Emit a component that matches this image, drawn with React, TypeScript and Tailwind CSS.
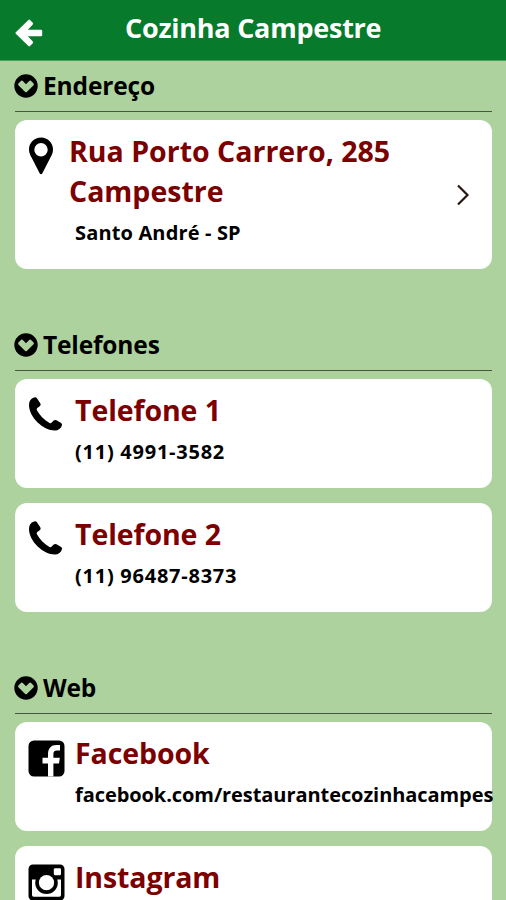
import type { ReactNode } from "react";

const SectionTitle = ({ children }: { children: ReactNode }) => {
  return (
    <div className="flex h-[51px] items-center border-b border-[#46583f] gap-[6px]">
      <svg className="-ml-[1px] h-[24px] w-[24px] shrink-0" viewBox="0 0 24 24">
        <circle cx="12" cy="12" r="11.7" fill="#000" />
        <path
          d="M4.4 9.6 L7.2 6.8 Q8 6.2 8.8 7 L12 10.2 L15.2 7 Q16 6.2 16.8 6.8 L19.6 9.6 Q20.2 10.4 19.6 11.2 L12.8 18 Q12 18.7 11.2 18 L4.4 11.2 Q3.8 10.4 4.4 9.6 Z"
          fill="#aed29d"
        />
      </svg>
      <h2 className="-ml-[1px] text-[24.5px] leading-[30px] font-bold tracking-[-0.15px] text-black whitespace-nowrap">{children}</h2>
    </div>
  );
};

const PinIcon = () => {
  return (
    <svg className="h-[38px] w-[26px]" viewBox="0 0 25 38">
      <path
        fillRule="evenodd"
        d="M12.5 0.5 C5.8 0.5 0.5 5.8 0.5 12.5 C0.5 15.5 1.6 18 3.2 20.8 L11 36 Q12.5 38.6 14 36 L21.8 20.8 C23.4 18 24.5 15.5 24.5 12.5 C24.5 5.8 19.2 0.5 12.5 0.5 Z M12.5 6 A6.7 6.7 0 1 1 12.5 19.4 A6.7 6.7 0 1 1 12.5 6 Z"
      />
    </svg>
  );
};

const PhoneIcon = () => {
  return (
    <svg className="h-[34px] w-[35px]" viewBox="0 0 34 34">
      <path d="M5.6 0.5 C2.2 1.6 0.4 4.3 0.5 8.4 C1 20.5 14.4 33 26.4 33.5 C29.8 33.5 32.6 31.6 33.5 28 Q33.8 26.6 32.6 25.9 L28 23.2 Q26.4 22.4 25.2 23.6 L23.2 25.6 Q22.2 26.5 21 25.9 C15.2 22.6 11.2 18.6 8.3 13.1 Q7.8 11.9 8.8 11.1 L11.2 9.3 Q12.8 8.2 11.9 6.6 L8.6 1.4 Q7.5 0 5.6 0.5 Z" />
    </svg>
  );
};

const FacebookIcon = () => {
  return (
    <svg className="h-[37px] w-[37px]" viewBox="0 0 37 37">
      <rect x="0.5" y="0.5" width="36" height="36" rx="5.5" />
      <path
        d="M20 36.5 V23.4 H14.5 V17.8 H20 V14 C20 8.4 23.3 5 28.3 5 H32 V10.4 H29 C26.7 10.4 25.4 11.5 25.4 13.8 V17.8 H31.8 L31 23.4 H25.4 V36.5 Z"
        fill="#fff"
      />
    </svg>
  );
};

const InstagramIcon = () => {
  return (
    <svg className="h-[37px] w-[37px]" viewBox="0 0 37 37">
      <rect x="0.5" y="0.5" width="36" height="36" rx="4.5" />
      <path d="M4 15.5 H33 V31 Q33 32.7 31.3 32.7 H5.7 Q4 32.7 4 31 Z" fill="#fff" />
      <circle cx="18.5" cy="18.7" r="11.3" />
      <circle cx="18.5" cy="18.7" r="7.6" fill="#fff" />
      <rect x="25.8" y="4.3" width="7.2" height="7" rx="1.2" fill="#fff" />
    </svg>
  );
};

const Card = ({ icon, title, children }: any) => {
  return (
    <div className="flex h-[109px] rounded-[12px] bg-white pl-[13px] pt-[18px]">
      <div className="w-[47px] shrink-0">{icon}</div>
      <div className="-mt-[7px] flex-1">
        <h3 className="text-[28.5px] leading-[40px] font-bold tracking-[-0.1px] text-[#7c0000]">{title}</h3>
        {children}
      </div>
    </div>
  );
};

const App = () => {
  return (
    <div className="h-[900px] w-[506px] overflow-hidden bg-[#aed29d] font-['Open_Sans','Noto_Sans',sans-serif] text-black">
      <header className="flex h-[61px] items-center border-b border-[#4d9f55] bg-[#077a2b] pl-[15px]">
        <svg className="mt-[5px] h-[28px] w-[28px] shrink-0" viewBox="0 0 28 28">
          <path
            d="M0.8 14.8 Q0 14 0.8 13.2 L13.4 1 Q14.2 0.2 15 0.9 L17.8 3.8 Q18.5 4.6 17.8 5.4 L12.9 10.7 H26 Q27.2 10.7 27.2 11.9 V16.1 Q27.2 17.3 26 17.3 H12.9 L17.8 22.6 Q18.5 23.4 17.8 24.2 L15 27.1 Q14.2 27.8 13.4 27 Z"
            fill="#fff"
          />
        </svg>
        <h1 className="-mt-[5px] ml-[82px] text-[27px] leading-[36px] font-bold tracking-[-0.25px] text-white whitespace-nowrap">Cozinha Campestre</h1>
      </header>
      <main className="pl-[15px] pr-[14px]">
        <SectionTitle>Endereço</SectionTitle>
        <div className="mt-[8px] flex h-[149px] rounded-[12px] bg-white pl-[13px] pt-[17px]">
          <div className="w-[41px] shrink-0">
            <PinIcon />
          </div>
          <div className="-mt-[6px] flex-1">
            <h3 className="text-[28.5px] leading-[40px] font-bold text-[#7c0000] whitespace-nowrap">
              Rua Porto Carrero, 285
              <br />
              Campestre
            </h3>
            <p className="pl-[6px] text-[20px] leading-[44px] font-bold tracking-[0.15px]">Santo André - SP</p>
          </div>
          <svg className="mr-[22px] mt-[47px] h-[22px] w-[14px]" viewBox="0 0 14 22">
            <path d="M2 1.5 L11.5 11 L2 20.5" fill="none" stroke="#2a1712" strokeWidth="2.2" />
          </svg>
        </div>
        <div className="mt-[51px]">
          <SectionTitle>Telefones</SectionTitle>
        </div>
        <div className="mt-[8px] flex flex-col gap-[15px]">
          <Card icon={<PhoneIcon />} title="Telefone 1">
            <p className="text-[20px] leading-[44px] font-bold tracking-[0.75px]">(11) 4991-3582</p>
          </Card>
          <Card icon={<PhoneIcon />} title="Telefone 2">
            <p className="text-[20px] leading-[44px] font-bold tracking-[0.75px]">(11) 96487-8373</p>
          </Card>
        </div>
        <div className="mt-[51px]">
          <SectionTitle>Web</SectionTitle>
        </div>
        <div className="mt-[8px] flex flex-col gap-[15px]">
          <Card icon={<FacebookIcon />} title="Facebook">
            <p className="text-[20px] leading-[44px] font-bold tracking-[-0.07px] whitespace-nowrap">facebook.com/restaurantecozinhacampes</p>
          </Card>
          <Card icon={<InstagramIcon />} title="Instagram" />
        </div>
      </main>
    </div>
  );
};

export default App;
